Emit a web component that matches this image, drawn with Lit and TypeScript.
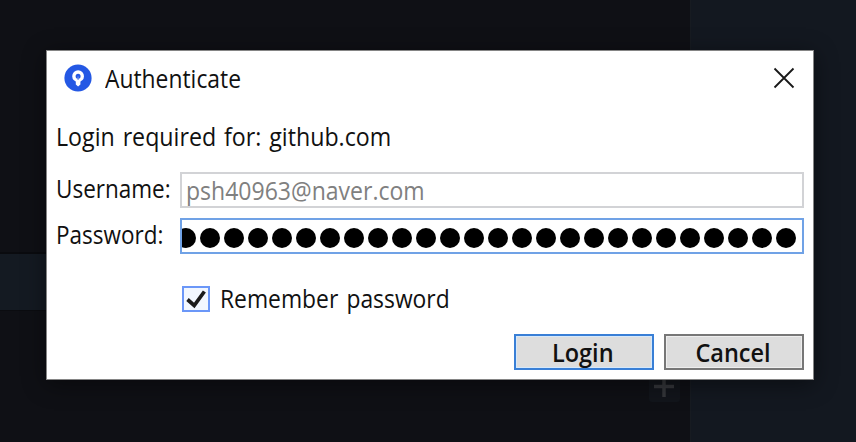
import { LitElement, html, css } from "lit";
import { customElement, state } from "lit/decorators.js";

const PASSWORD_LENGTH = 26;

@customElement("app-root")
export class AppRoot extends LitElement {
  @state() private remember = true;

  static styles = css`
    :host {
      display: block;
      position: relative;
      box-sizing: border-box;
      width: 856px;
      height: 442px;
      overflow: hidden;
      padding: 50px 42px 62px 46px;
      color: #111;
      font: 25px/34px "Open Sans", "Noto Sans", "Noto Sans CJK KR", sans-serif;
    }
    * { box-sizing: border-box; }
    .backdrop {
      position: absolute;
      inset: 0;
      display: grid;
      grid-template-columns: 690px 1fr;
      background: #0f1015;
    }
    .main { display: flex; flex-direction: column; }
    .strip {
      margin-top: 252px;
      height: 59px;
      border-top: 2px solid #0a0b0f;
      border-bottom: 1px solid #0b0c10;
      background: #141a22;
    }
    .add {
      align-self: flex-end;
      margin: 61px 10px 0 0;
      width: 31px;
      height: 30px;
      border-radius: 3px;
      background: #12151b;
    }
    .side { background: #131820; border-left: 1px solid #171b21; }
    .dialog {
      position: relative;
      display: flex;
      flex-direction: column;
      height: 330px;
      border: 1px solid #858585;
      background: #fff;
      box-shadow: 0 4px 22px rgba(0, 0, 0, 0.45);
    }
    .title { display: flex; align-items: center; height: 54px; padding: 0 18px 0 17px; }
    .logo { width: 28px; height: 28px; margin-right: 13px; }
    .close { width: 22px; height: 22px; margin-left: auto; }
    .t { display: inline-block; white-space: pre; transform-origin: 0 50%; }
    .t-title { transform: scaleX(0.914); }
    .t-host { transform: scaleX(0.928); word-spacing: 2px; }
    .t-label { transform: scaleX(0.9); margin-top: -1px; }
    .t-value { transform: scaleX(0.921); color: #808080; }
    .t-remember { transform: scaleX(0.914); margin-top: -2px; word-spacing: 2.5px; }
    .t-button { transform: translateX(-1px) scaleX(0.94); transform-origin: 50% 50%; }
    .message { height: 67px; padding: 14px 0 0 9px; }
    .row { display: grid; grid-template-columns: 124px 624px; height: 46px; padding-left: 9px; }
    .field { height: 36px; border: 2px solid #d2d3d6; padding-left: 4px; background: #fff; overflow: hidden; line-height: 33px; }
    .field.focus { display: flex; justify-content: flex-end; align-items: center; padding: 4px 4px 0 0; border-color: #70a2e6; }
    .dot { flex: 0 0 24px; height: 20px; display: flex; justify-content: center; }
    .dot::before { content: ""; width: 20px; height: 20px; border-radius: 50%; background: #000; }
    .check { display: flex; align-items: center; height: 34px; margin: 18px 0 0 135px; }
    .box { width: 28px; height: 26px; margin-right: 10px; border: 2px solid #6b97f8; background: #f2f7ff; }
    .box svg { display: block; width: 24px; height: 22px; }
    .buttons { display: flex; justify-content: flex-end; gap: 10px; margin: 18px 9px 0 0; }
    .button {
      width: 140px;
      height: 36px;
      border: 2px solid #777;
      box-shadow: inset 0 0 0 1px #eee;
      background: #ddd;
      text-align: center;
      line-height: 33px;
      font-weight: 600;
    }
    .button.primary { border-color: #397fd6; box-shadow: inset 0 0 0 1px #d5e8fa; }
  `;

  render() {
    return html`
      <div class="backdrop">
        <div class="main">
          <div class="strip"></div>
          <svg class="add" viewBox="0 0 31 30"><path d="M5 14.5H25M15 5V25" stroke="#34363a" stroke-width="3.5" /></svg>
        </div>
        <div class="side"></div>
      </div>
      <div class="dialog">
        <div class="title">
          <svg class="logo" viewBox="0 0 28 28">
            <circle cx="14" cy="14" r="13.6" fill="#2458e4" />
            <circle cx="14.1" cy="12.2" r="4.2" fill="none" stroke="#fff" stroke-width="3.4" />
            <path d="M11.8 15.5H16.4V20.6L14.1 22.4L11.8 20.6Z" fill="#fff" />
            <path d="M13.3 12.5H14.9L14.6 16H13.6Z" fill="#5f86ec" />
          </svg>
          <span class="t t-title">Authenticate</span>
          <svg class="close" viewBox="0 0 22 22"><path d="M1.5 1.5L20.5 20.5M20.5 1.5L1.5 20.5" stroke="#181818" stroke-width="1.8" /></svg>
        </div>
        <div class="message"><span class="t t-host">Login required for: github.com</span></div>
        <div class="row">
          <span class="t t-label">Username:</span>
          <div class="field"><span class="t t-value">psh40963@naver.com</span></div>
        </div>
        <div class="row">
          <span class="t t-label">Password:</span>
          <div class="field focus">${Array.from({ length: PASSWORD_LENGTH }, () => html`<i class="dot"></i>`)}</div>
        </div>
        <div class="check" @click=${() => (this.remember = !this.remember)}>
          <span class="box">
            ${this.remember
              ? html`<svg viewBox="0 0 24 22"><path d="M3.5 11.5L10.2 17.5L20.4 3.5" fill="none" stroke="#1b1b1b" stroke-width="3.7" /></svg>`
              : null}
          </span>
          <span class="t t-remember">Remember password</span>
        </div>
        <div class="buttons">
          <div class="button primary"><span class="t t-button">Login</span></div>
          <div class="button"><span class="t t-button">Cancel</span></div>
        </div>
      </div>
    `;
  }
}
